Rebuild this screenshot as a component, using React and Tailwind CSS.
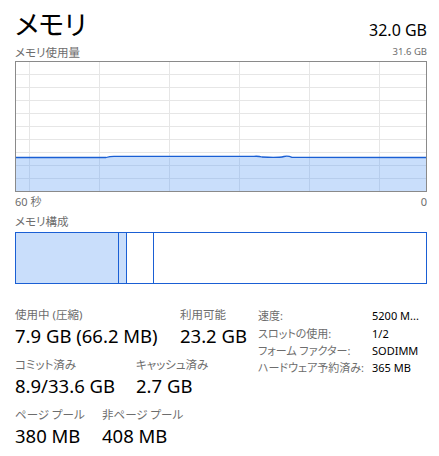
import React from 'react';

const FONT = { fontFamily: '"Noto Sans", "Noto Sans CJK JP", sans-serif' };

const Stat = ({ label, value, className = '' }) => (
  <div className={'flex flex-col ' + className}>
    <span className="text-[11.5px] leading-[16px] text-[#6d6d6d] whitespace-nowrap">{label}</span>
    <span className="text-[18.5px] leading-[26px] text-black whitespace-nowrap">{value}</span>
  </div>
);

const UsageGraph = () => {
  const vLines = [13, 83, 153, 223, 293, 363];
  const hLines = [12, 25, 38, 51, 64, 77, 90, 103, 116];
  // memory usage line (inner coords, 410 x 129)
  const line =
    'M0 95.5 L90 95.5 Q94 94.3 98 94.3 L238 94.3 Q243 94 246 95 Q262 96 268 94.5 Q272 93.6 276 95.4 L410 95.5';
  return (
    <div className="border border-[#8a8a8a] w-[412px] h-[131px]">
      <svg width="410" height="129" viewBox="0 0 410 129" className="block">
        {hLines.map((y) => (
          <line key={y} x1="0" x2="410" y1={y + 0.5} y2={y + 0.5} stroke="#e6e6e6" strokeWidth="1" />
        ))}
        {vLines.map((x) => (
          <line key={x} x1={x + 0.5} x2={x + 0.5} y1="0" y2="129" stroke="#e6e6e6" strokeWidth="1" />
        ))}
        <path d={line + ' L410 129 L0 129 Z'} fill="#c9defb" />
        {hLines.filter((y) => y > 96).map((y) => (
          <line key={'f' + y} x1="0" x2="410" y1={y + 0.5} y2={y + 0.5} stroke="#b7cdec" strokeWidth="1" />
        ))}
        {vLines.map((x) => (
          <line key={'fv' + x} x1={x + 0.5} x2={x + 0.5} y1="96" y2="129" stroke="#b7cdec" strokeWidth="1" />
        ))}
        <path d={line} fill="none" stroke="#1a5fd4" strokeWidth="1.3" />
      </svg>
    </div>
  );
};

const CompositionBar = () => (
  <div className="flex w-[412px] h-[52px] border border-[#1a5fd4]">
    <div className="w-[103px] bg-[#c9defb] border-r border-[#1a5fd4]" />
    <div className="w-[8px] bg-[#c9defb] border-r border-[#1a5fd4]" />
    <div className="w-[27px] border-r border-[#1a5fd4]" />
    <div className="flex-1" />
  </div>
);

const details = [
  ['速度:', '5200 M...'],
  ['スロットの使用:', '1/2'],
  ['フォーム ファクター:', 'SODIMM'],
  ['ハードウェア予約済み:', '365 MB'],
];

export default function App() {
  return (
    <div
      className="w-[439px] h-[456px] bg-white pl-[15px] pr-[12px] overflow-hidden [font-feature-settings:'palt']"
      style={FONT}
    >
      <div className="flex items-end justify-between pt-[2px] h-[44px]">
        <span className="text-[27px] leading-[38px] text-black">メモリ</span>
        <span className="text-[16px] leading-[22px] text-black pb-[3px]">32.0 GB</span>
      </div>
      <div className="flex justify-between items-center h-[17px] text-[#6d6d6d]">
        <span className="text-[11.5px]">メモリ使用量</span>
        <span className="text-[9.5px]">31.6 GB</span>
      </div>
      <UsageGraph />
      <div className="flex justify-between items-center h-[19px] mt-[1px] text-[11px] text-[#6d6d6d]">
        <span>60 秒</span>
        <span>0</span>
      </div>
      <div className="h-[20px] flex items-center text-[11.5px] text-[#6d6d6d]">メモリ構成</div>
      <CompositionBar />
      <div className="flex mt-[23px]">
        <div className="flex flex-col gap-[8px] w-[243px]">
          <div className="flex">
            <Stat label="使用中 (圧縮)" value="7.9 GB (66.2 MB)" className="w-[165px]" />
            <Stat label="利用可能" value="23.2 GB" />
          </div>
          <div className="flex">
            <Stat label="コミット済み" value="8.9/33.6 GB" className="w-[121px]" />
            <Stat label="キャッシュ済み" value="2.7 GB" />
          </div>
          <div className="flex">
            <Stat label="ページ プール" value="380 MB" className="w-[87px]" />
            <Stat label="非ページ プール" value="408 MB" />
          </div>
        </div>
        <div className="flex flex-col pt-[1px] text-[11px]">
          {details.map(([k, v]) => (
            <div key={k} className="flex h-[17.3px] items-center">
              <span className="w-[114px] text-[#6d6d6d] whitespace-nowrap">{k}</span>
              <span className="text-black whitespace-nowrap">{v}</span>
            </div>
          ))}
        </div>
      </div>
    </div>
  );
}
